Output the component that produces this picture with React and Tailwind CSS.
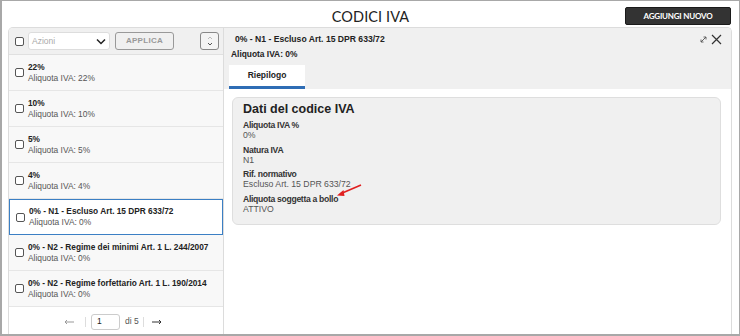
import React from "react";

const rows = [
  { t: "22%", s: "Aliquota IVA: 22%" },
  { t: "10%", s: "Aliquota IVA: 10%" },
  { t: "5%", s: "Aliquota IVA: 5%" },
  { t: "4%", s: "Aliquota IVA: 4%" },
  { t: "0% - N1 - Escluso Art. 15 DPR 633/72", s: "Aliquota IVA: 0%", sel: true },
  { t: "0% - N2 - Regime dei minimi Art. 1 L. 244/2007", s: "Aliquota IVA: 0%" },
  { t: "0% - N2 - Regime forfettario Art. 1 L. 190/2014", s: "Aliquota IVA: 0%" },
];

function Check() {
  return <div className="w-[9px] h-[9px] rounded-[2px] border border-[#555] bg-white shrink-0" />;
}

function Field({ l, v }) {
  return (
    <div className="flex flex-col h-[24.5px]">
      <div className="text-[8.6px] leading-[10px] font-bold text-[#333] tracking-[-0.3px]">{l}</div>
      <div className="text-[8.7px] leading-[10px] text-[#555]">{v}</div>
    </div>
  );
}

function RowText({ r }) {
  return (
    <div className="ml-[4px] flex flex-col">
      <div className="text-[8.3px] leading-[11px] font-bold text-[#222] whitespace-nowrap">{r.t}</div>
      <div className="text-[8.4px] leading-[11px] text-[#555] whitespace-nowrap">{r.s}</div>
    </div>
  );
}

export default function App() {
  return (
    <div
      className="w-[740px] h-[336px] overflow-hidden bg-white border-t border-r border-l-2 border-b-2 border-[#a8a8a8] flex flex-col"
      style={{ fontFamily: '"Liberation Sans", Arial, sans-serif' }}
    >
      <div className="relative h-[26px] shrink-0 flex items-center justify-center">
        <div className="text-[14.5px] text-[#222] tracking-[0.1px] mt-[5px]" style={{ fontFamily: 'Lato, "Liberation Sans", sans-serif' }}>
          CODICI IVA
        </div>
        <div className="absolute right-[8px] top-[6px] w-[106px] h-[18px] bg-[#333] border border-[#1a1a1a] rounded-[2px] flex items-center justify-center">
          <span className="text-white text-[8px] font-bold tracking-[-0.2px]" style={{ fontFamily: 'Lato, "Liberation Sans", sans-serif' }}>
            AGGIUNGI NUOVO
          </span>
        </div>
      </div>

      <div className="flex flex-1 ml-[6px] mr-[7px] border border-b-0 border-[#dcdcdc] rounded-t-[5px] overflow-hidden">
        {/* Left */}
        <div className="w-[215px] shrink-0 flex flex-col border-r border-[#dcdcdc]">
          <div className="h-[27px] shrink-0 bg-[#f0f0f0] border-b border-[#e0e0e0] flex items-center pl-[6px] pr-[4px]">
            <Check />
            <div className="ml-[4px] w-[82px] h-[18px] bg-white border border-[#ddd] rounded-[3px] flex items-center justify-between px-[3px]">
              <span className="text-[8.5px] text-[#aaa]">Azioni</span>
              <svg width="10" height="7" viewBox="0 0 10 7"><path d="M1 1.5 L5 5.5 L9 1.5" fill="none" stroke="#222" strokeWidth="1.5" /></svg>
            </div>
            <div className="ml-[5px] w-[59px] h-[18px] bg-[#f0f0f0] border border-[#999] rounded-[3px] flex items-center justify-center">
              <span className="text-[8px] font-bold text-[#999] tracking-[0.3px]">APPLICA</span>
            </div>
            <div className="ml-auto w-[19px] h-[18px] border border-[#888] rounded-[3px] bg-[#f4f4f4] flex items-center justify-center">
              <svg width="8" height="12" viewBox="0 0 8 12">
                <path d="M2 4 L4 2 L6 4" fill="none" stroke="#bbb" strokeWidth="1" />
                <path d="M2 8 L4 10 L6 8" fill="none" stroke="#555" strokeWidth="1" />
              </svg>
            </div>
          </div>
          {rows.map((r, i) =>
            r.sel ? (
              <div key={i} className="h-[36px] shrink-0 bg-white border-[1.5px] border-[#3b7fc4] flex items-center pl-[6px]">
                <Check />
                <RowText r={r} />
              </div>
            ) : (
              <div key={i} className="h-[36px] shrink-0 bg-[#f8f8f8] border-b border-[#e6e6e6] flex items-center pl-[6px]">
                <Check />
                <RowText r={r} />
              </div>
            )
          )}
          <div className="flex-1 bg-white flex items-center pl-[55px] pt-[2px]">
            <svg width="10" height="6" viewBox="0 0 10 6"><path d="M1 3 L10 3 M3 1 L1 3 L3 5" fill="none" stroke="#999" strokeWidth="1" /></svg>
            <div className="ml-[11px] w-px h-[10px] bg-[#ddd]" />
            <div className="ml-[5px] w-[29px] h-[16px] border border-[#ccc] rounded-[3px] flex items-center pl-[5px]">
              <span className="text-[8.5px] text-[#222]">1</span>
            </div>
            <span className="ml-[5px] text-[8.5px] text-[#555]">di 5</span>
            <div className="ml-[4px] w-px h-[10px] bg-[#ddd]" />
            <svg className="ml-[8px]" width="10" height="6" viewBox="0 0 10 6"><path d="M0 3 L9 3 M7 1 L9 3 L7 5" fill="none" stroke="#333" strokeWidth="1" /></svg>
          </div>
        </div>

        {/* Right */}
        <div className="flex-1 flex flex-col">
          <div className="h-[61px] shrink-0 bg-[#f0f0f0] flex flex-col relative">
            <div className="text-[8.6px] font-bold text-[#222] pl-[11px] pt-[6px] leading-[11px]">0% - N1 - Escluso Art. 15 DPR 633/72</div>
            <div className="text-[8.4px] font-bold text-[#222] pl-[7px] pt-[4px] leading-[11px]">Aliquota IVA: 0%</div>
            <div className="absolute right-[9px] top-[6px] flex items-center gap-[4px]">
              <svg width="7" height="7" viewBox="0 0 7 7">
                <path d="M1 6 L6 1" stroke="#555" strokeWidth="0.9" />
                <path d="M3.5 1 L6 1 L6 3.5" fill="none" stroke="#555" strokeWidth="0.9" />
                <path d="M1 3.5 L1 6 L3.5 6" fill="none" stroke="#555" strokeWidth="0.9" />
              </svg>
              <svg width="11" height="11" viewBox="0 0 11 11">
                <path d="M1 1 L10 10 M10 1 L1 10" stroke="#333" strokeWidth="1.2" />
              </svg>
            </div>
            <div className="mt-auto ml-[5px] w-[76px] h-[24px] bg-white border-b-[3px] border-[#2f6db5] flex items-center justify-center">
              <span className="text-[8.5px] font-bold text-[#222]">Riepilogo</span>
            </div>
          </div>
          <div className="pl-[8px] pr-[10px] pt-[8px]">
            <div className="h-[128px] bg-[#f0f0f0] border border-[#dedede] rounded-[6px] pl-[10px] pt-[4px] relative">
              <div className="text-[12.5px] font-bold text-[#222] leading-[14px] mb-[4px]">Dati del codice IVA</div>
              <Field l="Aliquota IVA %" v="0%" />
              <Field l="Natura IVA" v="N1" />
              <Field l="Rif. normativo" v="Escluso Art. 15 DPR 633/72" />
              <Field l="Aliquota soggetta a bollo" v="ATTIVO" />
              <svg className="absolute left-[103px] top-[86px]" width="26" height="14" viewBox="0 0 26 14">
                <path d="M25 1 L4 10" stroke="#e02020" strokeWidth="1.6" />
                <path d="M1 11.5 L7.5 6 L8.5 12 Z" fill="#e02020" />
              </svg>
            </div>
          </div>
        </div>
      </div>
    </div>
  );
}
